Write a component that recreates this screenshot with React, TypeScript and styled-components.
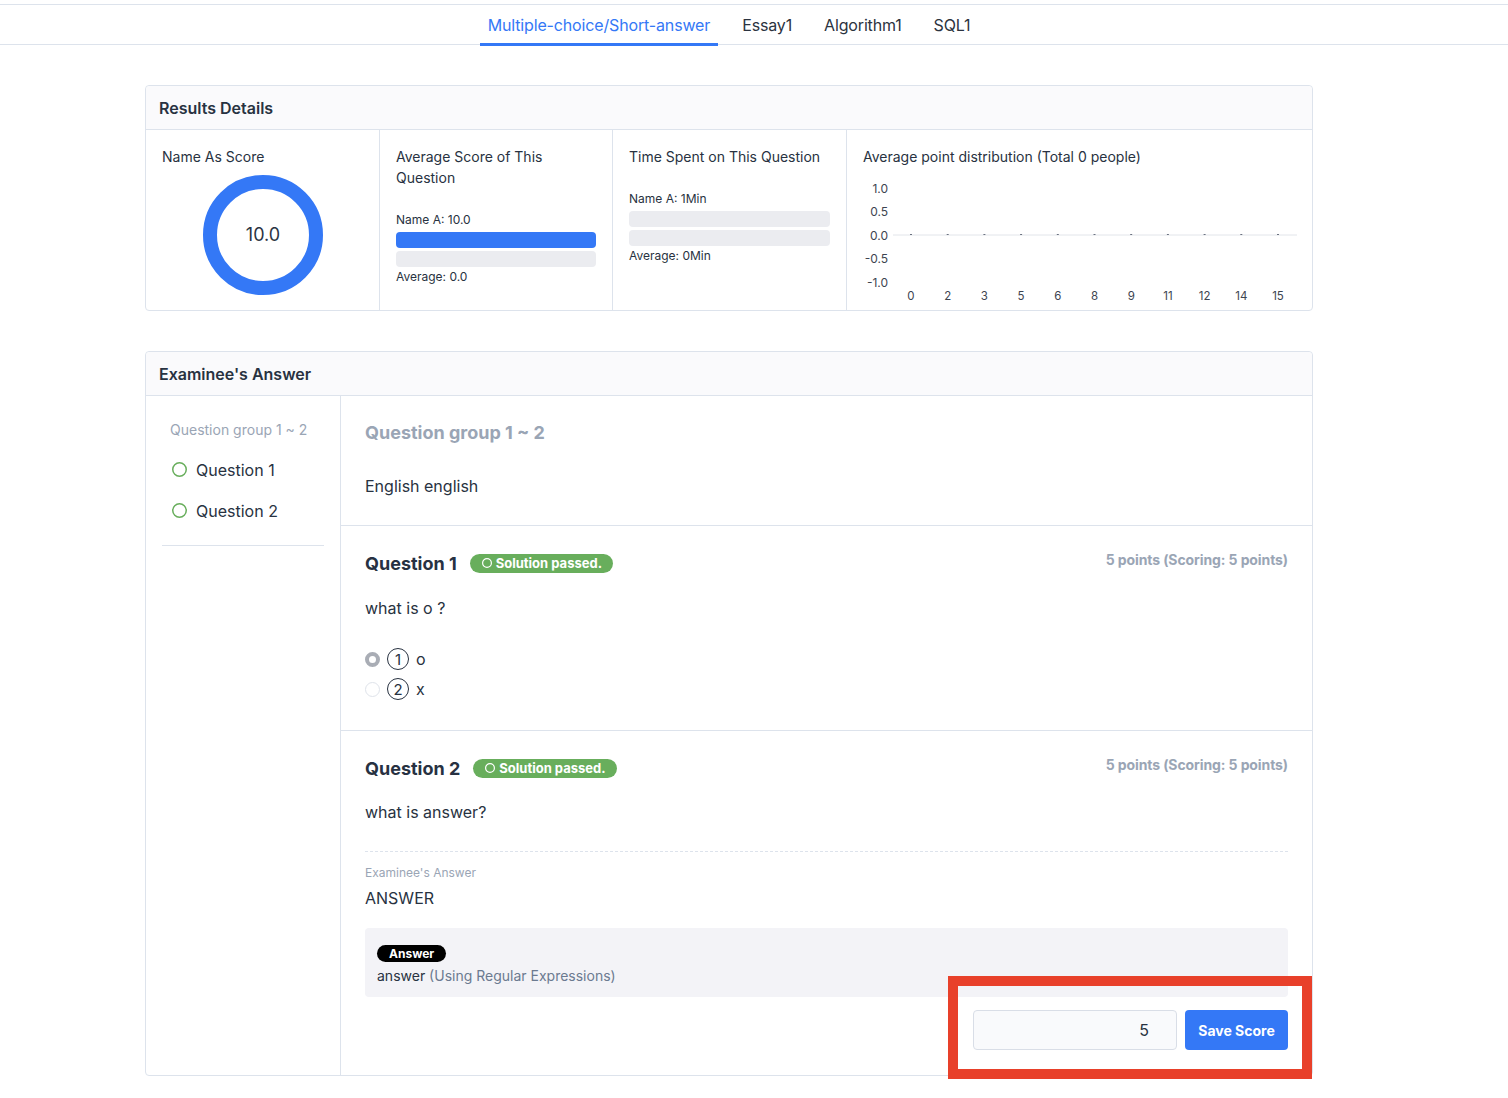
import styled, { createGlobalStyle } from "styled-components";

const GlobalStyle = createGlobalStyle`
  * { box-sizing: border-box; }
  body {
    margin: 0;
    background: #fff;
    font-family: Inter, "Noto Sans", "Liberation Sans", sans-serif;
    color: #283241;
  }
`;

const Page = styled.div`
  padding-top: 4px;
  padding-bottom: 20px;
`;

const TabBar = styled.div`
  display: flex;
  justify-content: center;
  gap: 16px;
  padding-right: 50px;
  border-top: 1px solid #dde3ec;
  border-bottom: 1px solid #dde3ec;
  height: 41px;
`;

const Tab = styled.div<{ $active?: boolean }>`
  display: flex;
  align-items: center;
  padding: 2px 8px 0;
  font-size: 16px;
  letter-spacing: -0.15px;
  color: ${(p) => (p.$active ? "#3478f6" : "#2b3340")};
  border-bottom: 3px solid ${(p) => (p.$active ? "#3478f6" : "transparent")};
  margin-bottom: -2px;
`;

const Content = styled.div`
  width: 1168px;
  margin: 40px 0 0 145px;
  display: flex;
  flex-direction: column;
  gap: 40px;
`;

const Card = styled.section`
  border: 1px solid #dde3ec;
  border-radius: 4px;
`;

const CardHeader = styled.div`
  height: 44px;
  display: flex;
  align-items: center;
  padding: 0 13px;
  background: #fafafc;
  border-bottom: 1px solid #dde3ec;
  border-radius: 4px 4px 0 0;
  font-size: 16px;
  font-weight: 600;
  color: #283241;
`;

const StatsGrid = styled.div`
  display: grid;
  grid-template-columns: 234px 233px 234px 1fr;
`;

const StatCol = styled.div<{ $pb?: number }>`
  padding: 16px 16px ${(p) => p.$pb ?? 13}px;
  border-right: 1px solid #dde3ec;
  &:last-child { border-right: none; }
`;

const StatTitle = styled.div`
  font-size: 14px;
  line-height: 21px;
  color: #283241;
`;

const Donut = styled.svg`
  display: block;
  margin: 8px auto 0;
`;

const BarBlock = styled.div`
  margin-top: 23px;
  display: flex;
  flex-direction: column;
`;

const SmallLabel = styled.div`
  font-size: 12px;
  line-height: 18px;
  color: #283241;
  & + div { margin-top: 3px; }
`;

const Bar = styled.div<{ $fill?: boolean }>`
  height: 16px;
  border-radius: 4px;
  background: ${(p) => (p.$fill ? "#3478f6" : "#ebecf0")};
  & + div { margin-top: 3px; }
  & + ${SmallLabel} { margin-top: 1px; }
`;

const Chart = styled.svg`
  display: block;
  margin-top: 11px;
`;

const AnswerBody = styled.div`
  display: grid;
  grid-template-columns: 195px 1fr;
`;

const Sidebar = styled.aside`
  border-right: 1px solid #dde3ec;
  padding: 24px 16px 0;
`;

const SideList = styled.div`
  padding: 0 8px 14px;
  border-bottom: 1px solid #dde3ec;
`;

const SideGroup = styled.div`
  font-size: 14px;
  line-height: 20px;
  color: #9aa5b5;
  margin-bottom: 9px;
`;

const SideItem = styled.div`
  display: flex;
  align-items: center;
  gap: 9px;
  height: 41px;
  font-size: 16px;
  color: #283241;
  padding-left: 2px;
`;

const Main = styled.div`
  display: flex;
  flex-direction: column;
`;

const Section = styled.div<{ $pb?: number }>`
  padding: 24px 24px ${(p) => p.$pb ?? 24}px;
  border-bottom: 1px solid #dde3ec;
  &:last-child { border-bottom: none; }
`;

const GroupTitle = styled.div`
  font-size: 18px;
  line-height: 26px;
  font-weight: 700;
  color: #9aa5b5;
  margin-bottom: 28px;
`;

const BodyText = styled.div<{ $mt?: number }>`
  font-size: 16px;
  line-height: 24px;
  color: #283241;
  margin-top: ${(p) => p.$mt ?? 0}px;
`;

const QHead = styled.div`
  display: flex;
  align-items: center;
  height: 26px;
`;

const QTitle = styled.div`
  font-size: 18px;
  font-weight: 700;
  color: #273142;
  margin-right: 13px;
`;

const PassBadge = styled.div`
  display: inline-flex;
  align-items: center;
  gap: 4px;
  height: 19px;
  padding: 0 11px 0 12px;
  border-radius: 10px;
  background: #68ae5c;
  color: #fff;
  font-size: 13px;
  font-weight: 700;
`;

const Points = styled.div`
  margin-left: auto;
  font-size: 14px;
  font-weight: 700;
  letter-spacing: -0.1px;
  color: #9aa5b5;
  align-self: flex-start;
  margin-top: 1px;
`;

const Options = styled.div`
  margin-top: 24px;
  display: flex;
  flex-direction: column;
`;

const Option = styled.div`
  display: flex;
  align-items: center;
  height: 30px;
  font-size: 16px;
  color: #283241;
`;

const Radio = styled.span<{ $checked?: boolean }>`
  width: 15px;
  height: 15px;
  border-radius: 50%;
  margin-right: 7px;
  background: #fff;
  border: ${(p) => (p.$checked ? "4px solid #a9adb5" : "1.5px solid #dfe3ea")};
`;

const Circled = styled.span`
  width: 22px;
  height: 22px;
  border-radius: 50%;
  border: 1.5px solid #283241;
  display: inline-flex;
  align-items: center;
  justify-content: center;
  font-size: 15px;
  margin-right: 7px;
`;

const Dashed = styled.div`
  margin-top: 27px;
  border-top: 1px dashed #dde3ec;
`;

const MetaLabel = styled.div`
  margin-top: 12px;
  font-size: 12px;
  line-height: 18px;
  color: #9aa5b5;
`;

const AnswerBox = styled.div`
  margin-top: 18px;
  background: #f3f3f7;
  border-radius: 4px;
  padding: 17px 12px 10px;
`;

const BlackPill = styled.div`
  display: flex;
  align-items: center;
  width: fit-content;
  height: 17px;
  padding: 0 12px;
  border-radius: 9px;
  background: #000;
  color: #fff;
  font-size: 12px;
  font-weight: 700;
`;

const AnswerLine = styled.div`
  margin-top: 3px;
  font-size: 14px;
  line-height: 22px;
  color: #283241;
`;

const Muted = styled.span`
  color: #6b7a90;
`;

const ScoreRow = styled.div`
  margin-top: 13px;
  display: flex;
  justify-content: flex-end;
`;

const ScoreControls = styled.div`
  position: relative;
  display: flex;
  gap: 8px;
`;

const ScoreInput = styled.input`
  width: 204px;
  height: 40px;
  border: 1px solid #d9dee7;
  border-radius: 4px;
  background: #f9fafc;
  text-align: right;
  padding: 0 27px;
  font-family: inherit;
  font-size: 16px;
  color: #283241;
  outline: none;
`;

const SaveButton = styled.button`
  width: 103px;
  height: 40px;
  border: none;
  border-radius: 4px;
  background: #3478f6;
  color: #fff;
  font-family: inherit;
  font-size: 14px;
  font-weight: 700;
`;

const Highlight = styled.div`
  position: absolute;
  top: -34px;
  left: -25px;
  right: -24px;
  bottom: -29px;
  border: 10px solid #e8402a;
  pointer-events: none;
`;

function CircleIcon({ size, color, width }: { size: number; color: string; width: number }) {
  const r = size / 2 - width / 2;
  return (
    <svg width={size} height={size} viewBox={`0 0 ${size} ${size}`}>
      <circle cx={size / 2} cy={size / 2} r={r} fill="none" stroke={color} strokeWidth={width} />
    </svg>
  );
}

const xTicks = ["0", "2", "3", "5", "6", "8", "9", "11", "12", "14", "15"];
const yTicks = [
  { label: "1.0", y: 10 },
  { label: "0.5", y: 33 },
  { label: "0.0", y: 57 },
  { label: "-0.5", y: 80 },
  { label: "-1.0", y: 104 },
];

function DistributionChart() {
  const x0 = 48;
  const step = 36.7;
  return (
    <Chart width={436} height={124} viewBox="0 0 436 124">
      <line x1={30} y1={57} x2={434} y2={57} stroke="#e2e5ea" strokeWidth={1} />
      {yTicks.map((t) => (
        <text key={t.label} x={25} y={t.y + 5} textAnchor="end" fontSize={12} fill="#3d4450" fontFamily="Inter, sans-serif">
          {t.label}
        </text>
      ))}
      {xTicks.map((t, i) => {
        const x = x0 + i * step;
        return (
          <g key={t}>
            <line x1={x - 1} y1={56.5} x2={x + 1} y2={56.5} stroke="#6b7280" strokeWidth={1} />
            <text x={x} y={122} textAnchor="middle" fontSize={11.5} fill="#3d4450" fontFamily="Inter, sans-serif">
              {t}
            </text>
          </g>
        );
      })}
    </Chart>
  );
}

export default function App() {
  return (
    <Page>
      <GlobalStyle />
      <TabBar>
        <Tab $active>Multiple-choice/Short-answer</Tab>
        <Tab>Essay1</Tab>
        <Tab>Algorithm1</Tab>
        <Tab>SQL1</Tab>
      </TabBar>

      <Content>
        <Card>
          <CardHeader>Results Details</CardHeader>
          <StatsGrid>
            <StatCol>
              <StatTitle>Name As Score</StatTitle>
              <Donut width={120} height={120} viewBox="0 0 120 120">
                <circle cx={60} cy={60} r={53} fill="none" stroke="#3478f6" strokeWidth={14} />
                <text x={60} y={66} textAnchor="middle" fontSize={18} fill="#2b3443" fontFamily="Inter, sans-serif">
                  10.0
                </text>
              </Donut>
            </StatCol>
            <StatCol>
              <StatTitle>Average Score of This Question</StatTitle>
              <BarBlock>
                <SmallLabel>Name A: 10.0</SmallLabel>
                <Bar $fill />
                <Bar />
                <SmallLabel>Average: 0.0</SmallLabel>
              </BarBlock>
            </StatCol>
            <StatCol>
              <StatTitle>Time Spent on This Question</StatTitle>
              <BarBlock>
                <SmallLabel>Name A: 1Min</SmallLabel>
                <Bar />
                <Bar />
                <SmallLabel>Average: 0Min</SmallLabel>
              </BarBlock>
            </StatCol>
            <StatCol $pb={8}>
              <StatTitle>Average point distribution (Total 0 people)</StatTitle>
              <DistributionChart />
            </StatCol>
          </StatsGrid>
        </Card>

        <Card>
          <CardHeader>Examinee's Answer</CardHeader>
          <AnswerBody>
            <Sidebar>
              <SideList>
                <SideGroup>Question group 1 ~ 2</SideGroup>
                <SideItem>
                  <CircleIcon size={15} color="#68ae5c" width={1.5} />
                  Question 1
                </SideItem>
                <SideItem>
                  <CircleIcon size={15} color="#68ae5c" width={1.5} />
                  Question 2
                </SideItem>
              </SideList>
            </Sidebar>

            <Main>
              <Section $pb={27}>
                <GroupTitle>Question group 1 ~ 2</GroupTitle>
                <BodyText>English english</BodyText>
              </Section>

              <Section $pb={26}>
                <QHead>
                  <QTitle>Question 1</QTitle>
                  <PassBadge>
                    <CircleIcon size={10} color="#fff" width={1.2} />
                    Solution passed.
                  </PassBadge>
                  <Points>5 points (Scoring: 5 points)</Points>
                </QHead>
                <BodyText $mt={20}>what is o ?</BodyText>
                <Options>
                  <Option>
                    <Radio $checked />
                    <Circled>1</Circled>o
                  </Option>
                  <Option>
                    <Radio />
                    <Circled>2</Circled>x
                  </Option>
                </Options>
              </Section>

              <Section $pb={25}>
                <QHead>
                  <QTitle>Question 2</QTitle>
                  <PassBadge>
                    <CircleIcon size={10} color="#fff" width={1.2} />
                    Solution passed.
                  </PassBadge>
                  <Points>5 points (Scoring: 5 points)</Points>
                </QHead>
                <BodyText $mt={19}>what is answer?</BodyText>
                <Dashed />
                <MetaLabel>Examinee's Answer</MetaLabel>
                <BodyText $mt={4}>ANSWER</BodyText>
                <AnswerBox>
                  <BlackPill>Answer</BlackPill>
                  <AnswerLine>
                    answer <Muted>(Using Regular Expressions)</Muted>
                  </AnswerLine>
                </AnswerBox>
                <ScoreRow>
                  <ScoreControls>
                    <ScoreInput defaultValue="5" />
                    <SaveButton>Save Score</SaveButton>
                    <Highlight />
                  </ScoreControls>
                </ScoreRow>
              </Section>
            </Main>
          </AnswerBody>
        </Card>
      </Content>
    </Page>
  );
}
